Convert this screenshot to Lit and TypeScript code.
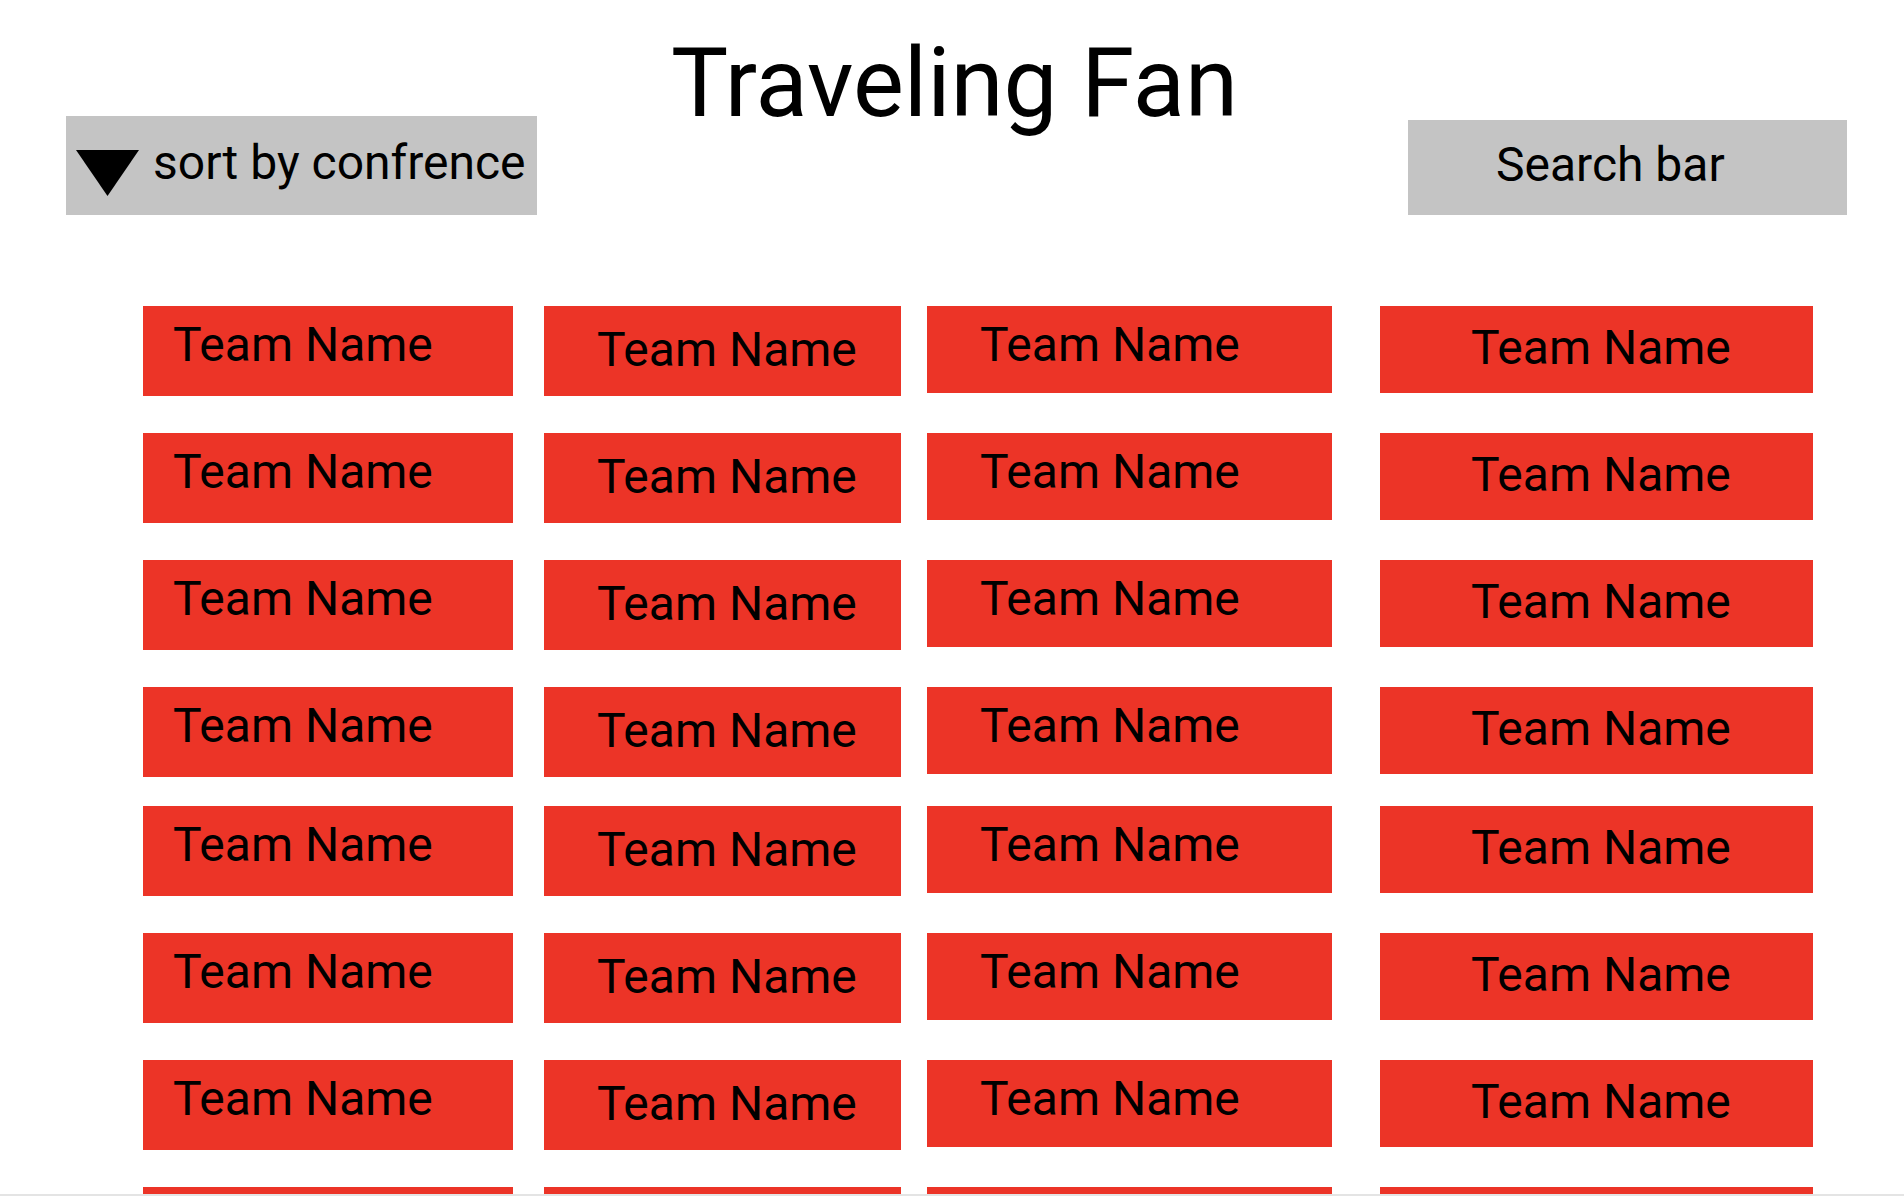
import { LitElement, html, css } from "lit";
import { customElement, property } from "lit/decorators.js";

const COLUMNS = ["first", "second", "third", "fourth"];
const TEAM = "Team Name";
const ROW_GROUPS = [
  [TEAM, TEAM, TEAM, TEAM],
  [TEAM, TEAM, TEAM, ""],
];

@customElement("conference-sort")
class ConferenceSort extends LitElement {
  static styles = css`
    :host {
      display: block;
    }
    .sort {
      display: flex;
      align-items: flex-start;
      box-sizing: border-box;
      height: 99px;
      padding: 18px 0 0 10px;
      gap: 14px;
      background: #c4c4c4;
    }
    .arrow {
      flex: none;
      width: 63px;
      height: 46px;
      margin-top: 16px;
    }
    .choice {
      flex: 1;
      min-width: 0;
      height: 58px;
      margin: 0;
      padding: 0;
      border: 0;
      background: transparent;
      color: #000;
      font: 48px/56px Roboto, sans-serif;
      appearance: none;
    }
  `;

  render() {
    return html`
      <label class="sort">
        <svg class="arrow" viewBox="0 0 63 46" aria-hidden="true">
          <polygon points="0,0 63,0 31.5,46" />
        </svg>
        <select class="choice">
          <option>sort by confrence</option>
        </select>
      </label>
    `;
  }
}

@customElement("team-tile")
class TeamTile extends LitElement {
  @property() name = "";

  static styles = css`
    :host {
      display: block;
      box-sizing: border-box;
      background: #ec3427;
    }
    .link {
      display: block;
      color: #000;
      font: 48px/56px Roboto, sans-serif;
      text-decoration: none;
      white-space: nowrap;
    }
  `;

  render() {
    return html`<a class="link" href="#team">${this.name}</a>`;
  }
}

@customElement("app-root")
class AppRoot extends LitElement {
  static styles = css`
    :host {
      display: block;
      box-sizing: border-box;
      height: 100vh;
      overflow: hidden;
      border-bottom: 2px solid #e4e4e4;
      background: #fff;
      color: #000;
      font-family: Roboto, sans-serif;
    }
    .header {
      display: grid;
      grid-template-columns: 471fr 871fr 439fr;
      align-items: end;
      padding: 27px 57px 0 66px;
    }
    .title {
      grid-area: 1 / 1 / 2 / -1;
      place-self: start center;
      margin: 0 4px 76px 0;
      font-size: 96px;
      line-height: 112px;
      font-weight: 400;
    }
    .sort {
      grid-area: 1 / 1;
    }
    .search {
      grid-area: 1 / 3;
      box-sizing: border-box;
      width: 100%;
      height: 95px;
      margin: 0;
      padding: 16px 0 23px 88px;
      border: 0;
      border-radius: 0;
      background: #c4c4c4;
      color: #000;
      font: 48px/56px Roboto, sans-serif;
      appearance: none;
    }
    .search::placeholder {
      color: #000;
      opacity: 1;
    }
    .teams {
      display: flex;
      flex-direction: column;
      gap: 29px;
      padding: 91px 91px 0 143px;
    }
    .group {
      display: flex;
      flex-direction: column;
      gap: 37px;
    }
    .row {
      display: grid;
      grid-template-columns: 370fr 31px 357fr 26px 405fr 48px 433fr;
      align-items: start;
      height: 90px;
    }
    .first {
      grid-column: 1;
      height: 90px;
      padding: 11px 0 0 30px;
    }
    .second {
      grid-column: 3;
      height: 90px;
      padding: 16px 0 0 53px;
    }
    .third {
      grid-column: 5;
      height: 87px;
      padding: 11px 0 0 53px;
    }
    .fourth {
      grid-column: 7;
      height: 87px;
      padding: 14px 0 0 91px;
    }
  `;

  private renderRow(name: string) {
    return html`
      <div class="row">
        ${COLUMNS.map(
          (column) => html`<team-tile class=${column} name=${name}></team-tile>`
        )}
      </div>
    `;
  }

  render() {
    return html`
      <header class="header">
        <h1 class="title">Traveling Fan</h1>
        <conference-sort class="sort"></conference-sort>
        <input class="search" type="search" placeholder="Search bar" aria-label="Search bar" />
      </header>
      <main class="teams">
        ${ROW_GROUPS.map(
          (names) => html`
            <section class="group">${names.map((name) => this.renderRow(name))}</section>
          `
        )}
      </main>
    `;
  }
}
